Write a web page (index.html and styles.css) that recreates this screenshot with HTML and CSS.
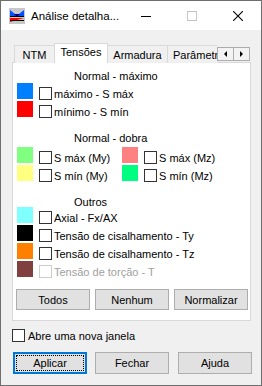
FILE: index.html
```html
<!DOCTYPE html>
<html lang="pt">
<head>
<meta charset="UTF-8">
<meta name="viewport" content="width=device-width, initial-scale=1.0">
<title>Análise detalhada</title>
<link rel="stylesheet" href="styles.css">
</head>
<body>
<div class="window">
    <div class="titlebar">
        <svg class="app-icon" width="16" height="16" viewBox="0 0 16 16">
            <rect x="0" y="0" width="16" height="16" fill="#c8c8c8"/>
            <polygon points="1,2 6,6 10,6 15,2 15,8 1,8" fill="#0050ff"/>
            <polygon points="5,6 11,6 9,8 7,8" fill="#00008b"/>
            <rect x="1" y="8" width="14" height="1" fill="#000"/>
            <polygon points="1,10 15,10 1,14" fill="#ff0000"/>
            <rect x="1" y="12" width="14" height="1" fill="#000"/>
        </svg>
        <span class="title">Análise detalha...</span>
        <div class="controls">
            <div class="ctl">
                <svg width="10" height="10" viewBox="0 0 10 10"><rect x="0" y="5" width="10" height="1" fill="#000"/></svg>
            </div>
            <div class="ctl">
                <svg width="10" height="10" viewBox="0 0 10 10"><rect x="0.5" y="0.5" width="9" height="9" fill="none" stroke="#c4c4c4"/></svg>
            </div>
            <div class="ctl">
                <svg width="10" height="10" viewBox="0 0 10 10"><path d="M0 0 L10 10 M10 0 L0 10" stroke="#000" stroke-width="1.1"/></svg>
            </div>
        </div>
    </div>

    <div class="content">
        <div class="tabbar">
            <div class="tabs">
                <div class="tab tab-ntm">NTM</div>
                <div class="tab tab-active">Tensões</div>
                <div class="tab tab-arm">Armadura</div>
                <div class="tab tab-par">Parâmetros</div>
            </div>
            <div class="tab-scroll">
                <span class="arrow arrow-left"></span>
                <span class="arrow arrow-right"></span>
            </div>
        </div>

        <div class="panel">
            <div class="group-title first">Normal - máximo</div>
            <div class="row">
                <span class="swatch" style="background:#0080ff"></span>
                <span class="box"></span><span class="label">máximo - S máx</span>
            </div>
            <div class="row">
                <span class="swatch" style="background:#ff0000"></span>
                <span class="box"></span><span class="label">mínimo - S mín</span>
            </div>

            <div class="group-title second">Normal - dobra</div>
            <div class="pair">
                <div class="row">
                    <span class="swatch" style="background:#80ff80"></span>
                    <span class="box"></span><span class="label">S máx (My)</span>
                </div>
                <div class="row">
                    <span class="swatch" style="background:#ff8080"></span>
                    <span class="box"></span><span class="label">S máx (Mz)</span>
                </div>
                <div class="row">
                    <span class="swatch" style="background:#ffff80"></span>
                    <span class="box"></span><span class="label">S mín (My)</span>
                </div>
                <div class="row">
                    <span class="swatch" style="background:#00ff80"></span>
                    <span class="box"></span><span class="label">S mín (Mz)</span>
                </div>
            </div>

            <div class="group-title third">Outros</div>
            <div class="row">
                <span class="swatch" style="background:#80ffff"></span>
                <span class="box"></span><span class="label">Axial - Fx/AX</span>
            </div>
            <div class="row">
                <span class="swatch" style="background:#000000"></span>
                <span class="box"></span><span class="label">Tensão de cisalhamento - Ty</span>
            </div>
            <div class="row">
                <span class="swatch" style="background:#ff8000"></span>
                <span class="box"></span><span class="label">Tensão de cisalhamento - Tz</span>
            </div>
            <div class="row disabled">
                <span class="swatch" style="background:#804040"></span>
                <span class="box"></span><span class="label">Tensão de torção - T</span>
            </div>

            <div class="panel-buttons">
                <button class="btn">Todos</button>
                <button class="btn">Nenhum</button>
                <button class="btn">Normalizar</button>
            </div>
        </div>

        <div class="new-window">
            <span class="box"></span><span class="label">Abre uma nova janela</span>
        </div>

        <div class="actions">
            <button class="btn btn-default"><span class="focus">Aplicar</span></button>
            <button class="btn">Fechar</button>
            <button class="btn">Ajuda</button>
        </div>
    </div>
</div>
</body>
</html>
```

FILE: styles.css
```css
body {
    margin: 0;
    font-family: "Liberation Sans", Arial, sans-serif;
    font-size: 11px;
    color: #000;
}
.window {
    width: 262px;
    height: 386px;
    box-sizing: border-box;
    border: 1px solid #6e6e6e;
    background-color: #f0f0f0;
    display: flex;
    flex-direction: column;
}
.titlebar {
    height: 29px;
    background-color: #fff;
    display: flex;
    align-items: center;
}
.app-icon {
    margin-left: 8px;
    margin-top: 1px;
    flex-shrink: 0;
}
.title {
    margin-left: 6px;
    font-size: 11.5px;
    white-space: nowrap;
}
.controls {
    margin-left: auto;
    display: flex;
    flex-shrink: 0;
}
.ctl {
    width: 46px;
    height: 29px;
    display: flex;
    align-items: center;
    justify-content: center;
}
.content {
    flex: 1;
    padding: 12px 0 0 11px;
}
.tabbar {
    display: flex;
    height: 20px;
    width: 238px;
}
.tabs {
    display: flex;
    align-items: flex-end;
    width: 207px;
    overflow: hidden;
    padding-left: 2px;
    height: 21px;
}
.tab {
    height: 18px;
    box-sizing: border-box;
    border: 1px solid #d9d9d9;
    border-bottom: none;
    background-color: #f0f0f0;
    text-align: center;
    line-height: 19px;
    flex-shrink: 0;
    margin-left: -1px;
}
.tab-ntm {
    width: 41px;
    margin-left: 0;
}
.tab-active {
    width: 54px;
    height: 21px;
    line-height: 17px;
    background-color: #fff;
    position: relative;
    z-index: 1;
    margin-bottom: -1px;
}
.tab-arm {
    width: 61px;
}
.tab-par {
    width: 70px;
    text-align: left;
    padding-left: 5px;
}
.tab-scroll {
    display: flex;
    margin-top: 5px;
    height: 12px;
    border: 1px solid #adadad;
    background-color: #f3f3f3;
}
.arrow {
    width: 15px;
    display: flex;
    align-items: center;
    justify-content: center;
}
.arrow-left {
    border-right: 1px solid #adadad;
}
.arrow-left::before {
    content: "";
    border-top: 3px solid transparent;
    border-bottom: 3px solid transparent;
    border-right: 3px solid #000;
}
.arrow-right::before {
    content: "";
    border-top: 3px solid transparent;
    border-bottom: 3px solid transparent;
    border-left: 3px solid #000;
}
.panel {
    width: 239px;
    height: 259px;
    box-sizing: border-box;
    border: 1px solid #d9d9d9;
    background-color: #fff;
    padding: 6px 0 0 4px;
}
.group-title {
    line-height: 14px;
    padding-left: 57px;
}
.group-title.second {
    margin-top: 12px;
    margin-bottom: 2px;
}
.group-title.third {
    margin-top: 12px;
    margin-bottom: -2px;
}
.row {
    display: flex;
    align-items: flex-start;
    height: 18px;
}
.pair {
    display: grid;
    grid-template-columns: 105px 1fr;
}
.swatch {
    width: 16px;
    height: 16px;
    margin-right: 6px;
}
.box {
    width: 13px;
    height: 13px;
    box-sizing: border-box;
    border: 1px solid #333;
    background-color: #fff;
    margin-top: 4px;
    margin-right: 2px;
}
.label {
    line-height: 18px;
    padding-top: 2px;
    white-space: nowrap;
}
.disabled .box {
    border-color: #cccccc;
}
.disabled .label {
    color: #a0a0a0;
}
.panel-buttons {
    display: flex;
    gap: 5px;
    margin: 10px 0 0 -1px;
}
.btn {
    width: 74px;
    height: 21px;
    border: 1px solid #adadad;
    background-color: #e1e1e1;
    font-family: inherit;
    font-size: 11px;
    color: #000;
    padding: 0;
}
.new-window {
    display: flex;
    align-items: center;
    margin-top: 7px;
    margin-left: 0;
    height: 15px;
}
.new-window .box {
    margin-top: 0;
    margin-right: 3px;
}
.new-window .label {
    padding-top: 0;
}
.actions {
    display: flex;
    margin-top: 9px;
    margin-left: 1px;
}
.actions .btn {
    height: 22px;
    margin-right: 8px;
}
.actions .btn:last-child {
    margin-right: 0;
}
.actions .btn:nth-child(2) {
    margin-right: 9px;
}
.btn-default {
    border: 2px solid #0078d7;
    padding: 1px;
}
.btn-default .focus {
    display: flex;
    height: 100%;
    align-items: center;
    justify-content: center;
    box-sizing: border-box;
    border: 1px dotted #000;
}
```
